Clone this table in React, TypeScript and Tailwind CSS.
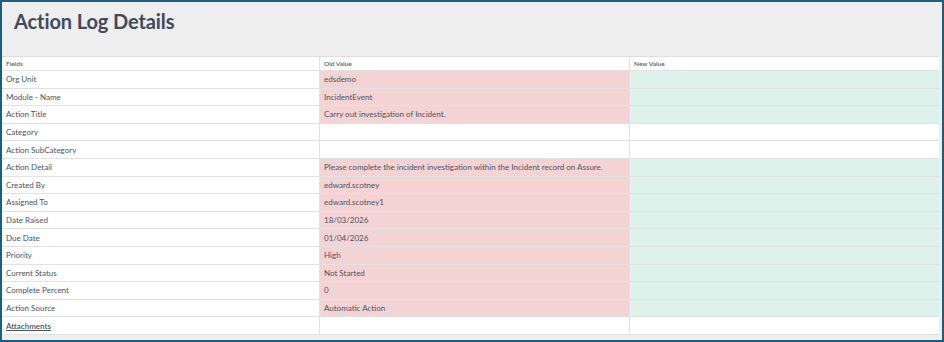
import React from "react";

type Row = { field: string; old: string; changed: boolean; link?: boolean };

const rows: Row[] = [
  { field: "Org Unit", old: "edsdemo", changed: true },
  { field: "Module - Name", old: "IncidentEvent", changed: true },
  { field: "Action Title", old: "Carry out investigation of Incident.", changed: true },
  { field: "Category", old: "", changed: false },
  { field: "Action SubCategory", old: "", changed: false },
  { field: "Action Detail", old: "Please complete the incident investigation within the Incident record on Assure.", changed: true },
  { field: "Created By", old: "edward.scotney", changed: true },
  { field: "Assigned To", old: "edward.scotney1", changed: true },
  { field: "Date Raised", old: "18/03/2026", changed: true },
  { field: "Due Date", old: "01/04/2026", changed: true },
  { field: "Priority", old: "High", changed: true },
  { field: "Current Status", old: "Not Started", changed: true },
  { field: "Complete Percent", old: "0", changed: true },
  { field: "Action Source", old: "Automatic Action", changed: true },
  { field: "Attachments", old: "", changed: false, link: true },
];

export default function App() {
  return (
    <div
      className="w-[944px] h-[342px] border-2 border-[#1e5d7e] bg-[#eeeeee] flex flex-col overflow-hidden"
      style={{ fontFamily: "Lato, 'Open Sans', sans-serif" }}
    >
      <div className="h-[54px] shrink-0 pl-[12px] pt-[6px]">
        <h1 className="text-[20px] leading-[26px] font-bold text-[#3f4a5a] tracking-[-0.1px]">Action Log Details</h1>
      </div>
      <div className="w-[937px] bg-white border-t border-[#dedede] text-[#4a5363]">
        <div className="grid grid-cols-[318px_310px_309px] h-[14px] border-b border-[#e2e2e2] text-[6.5px] font-semibold text-[#555d6b]">
          <div className="pl-[4px] flex items-center border-r border-[#e2e2e2]">Fields</div>
          <div className="pl-[4px] flex items-center border-r border-[#e2e2e2]">Old Value</div>
          <div className="pl-[4px] flex items-center">New Value</div>
        </div>
        {rows.map((r) => (
          <div
            key={r.field}
            className="grid grid-cols-[318px_310px_309px] h-[17.6px] border-b border-[#e2e2e2] text-[8px]"
          >
            <div className="pl-[4px] flex items-center border-r border-[#e2e2e2]">
              {r.link ? <span className="underline font-semibold">{r.field}</span> : r.field}
            </div>
            <div
              className={`pl-[4px] flex items-center border-r border-[#e2e2e2] ${
                r.changed ? "bg-[#f4d3d4]" : "bg-white"
              }`}
            >
              {r.old}
            </div>
            <div className={r.changed ? "bg-[#dcf2ea]" : "bg-white"}></div>
          </div>
        ))}
      </div>
    </div>
  );
}
